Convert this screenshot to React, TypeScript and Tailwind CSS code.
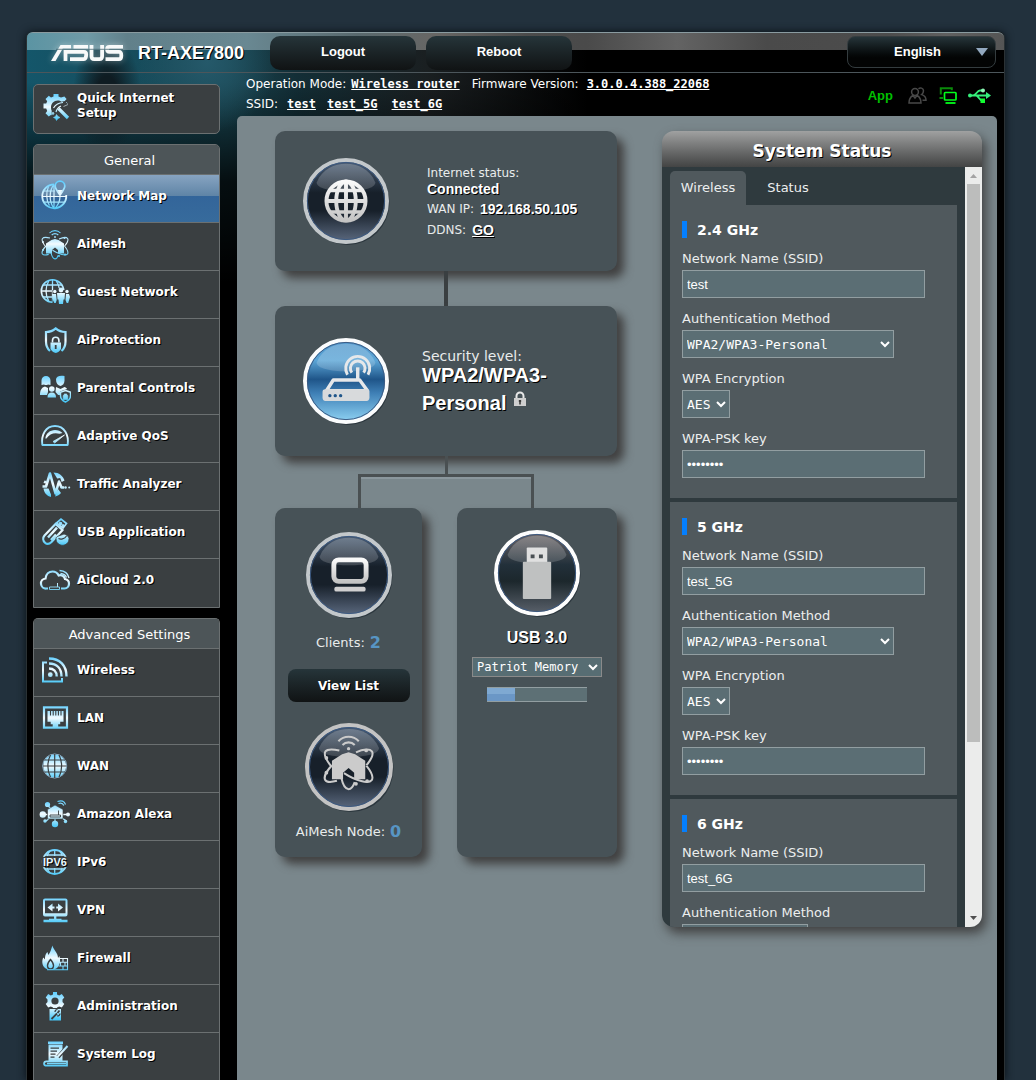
import type { ReactNode } from 'react'

const ice = 'url(#ice)'

interface IconProps {
  children: ReactNode
}

function MenuIcon({ children }: IconProps) {
  return (
    <svg viewBox="0 0 32 32" className="h-8 w-8 shrink-0" fill="none" stroke={ice} strokeWidth="1.6" aria-hidden="true">
      {children}
    </svg>
  )
}

function MeshShape({ paint }: { paint: string }) {
  return (
    <g fill="none" stroke={paint} strokeWidth="1.1">
      <path d="M10.5 5a7.500 7.500 0 0 1 11 0M12.700 7a4.600 4.600 0 0 1 6.600 0" />
      <circle cx="16" cy="9" r="0.9" fill={paint} stroke="none" />
      <path d="M16 11 12.500 12 7 15.500v10h6V22l3-2.500 3 2.500v3.500h6v-10L19.500 12z" fill={paint} stroke="none" />
      <path d="M20 11c4-1.800 7.500-2 8.600-.5 1 1.500-.5 4.500-3 7.500M11 10c-3.500-.8-6.500-.8-7.500.5-1 1.500.6 5 3.500 8.500M7 18c-3 3.200-4.600 6.500-3.600 8 .8 1.200 3.300 1.200 6.300.4M25.500 18c2.800 3.500 4 6.500 3 8-1.700 2.200-8.500.4-15-3.800" />
      <path d="M12 24.500c.8 3.800 2.300 6.400 4 6.400 1.300 0 2.500-1.500 3.300-3.800" />
      <circle cx="25.500" cy="10" r="1" fill={paint} stroke="none" />
      <circle cx="4" cy="14" r="1" fill={paint} stroke="none" />
      <circle cx="4" cy="22" r="1" fill={paint} stroke="none" />
      <circle cx="26" cy="26.500" r="1" fill={paint} stroke="none" />
      <circle cx="20" cy="28" r="1" fill={paint} stroke="none" />
    </g>
  )
}

const icons: Record<string, ReactNode> = {
  setup: (
    <MenuIcon>
      <path
        d="M22 6.500l-2.500-1V3h-5v2.500L12 6.600 9.800 4.800 6.500 8.100 8.200 10.300l-1 2.300H4.500v5h2.700l1 2.500-1.700 2.200 3.200 3.200 2.200-1.600.8.400v-4.500a7 7 0 0 1-.7-3.200c0-4 2.800-7 6.800-7 1.500 0 2.700.5 3.700 1.200l3.300-.8 1.800-2-2.200-2.500z"
        fill={ice}
        stroke="none"
      />
      <path d="M19.500 17.500 29 27" strokeWidth="3.200" />
      <path d="M14.500 17a12 12 0 0 1 9.500-5.500M17 21a9 9 0 0 1 5-6" strokeWidth="1.200" />
      <path d="M27 11l1.600 1.600M24.500 15.500l4.500-2M17.500 23.500l1.500 2 2 1-2 1-1.500 2-1-2-2-1 2-1zM14 21l1 1.400-1 1.400-1-1.400z" fill={ice} strokeWidth="0.6" />
    </MenuIcon>
  ),
  map: (
    <MenuIcon>
      <path d="M15 4.300A12 12 0 1 0 27.200 15" strokeWidth="1.800" />
      <path d="M15 4.500c-4.500 5-5.500 16-.5 23.300M16.500 27.800c3-3.500 4.500-7.500 4.500-11.300M15 4.500V28M4.800 11H16M3.500 16.500h24M5 22.200h20.500M9.500 6.500C8 10 7.500 13 7.800 16.500c.1 4 1.200 7 2.700 9" strokeWidth="1.200" />
      <path d="M21 15c-2.800-4-4.800-6.500-4.800-9a4.800 4.800 0 0 1 9.600 0c0 2.500-2 5-4.800 9z" fill="#6a8cad" strokeWidth="1.700" />
      <path d="M18.500 10 21 15l2.500-5z" fill="#e6f7ff" stroke="none" />
    </MenuIcon>
  ),
  mesh: (
    <MenuIcon>
      <MeshShape paint={ice} />
    </MenuIcon>
  ),
  guest: (
    <MenuIcon>
      <circle cx="13.500" cy="15" r="11.200" />
      <path d="M13.500 3.800v22.400M2.300 15H18M4 9h19M4 21h10M10 4.300c-4 6.500-4 15 0 21.400M17 4.300c2 3 3 5.500 3.200 8" strokeWidth="1.300" />
      <path d="M13.500 14h16v13h-16z" fill="#3a3f41" stroke="none" />
      <g fill={ice} stroke="none">
        <circle cx="22" cy="14" r="2.400" />
        <circle cx="15.800" cy="15.500" r="1.700" />
        <circle cx="28" cy="15.500" r="1.700" />
        <path d="M18 17h8l-.5 6.500h-1L24 28h-4l-.5-4.500h-1zM13 18h4l.7 6-1 3h-1.400l-2.100-4.500zM27 18h3l1 3-1.800 6h-1.500l-1.200-3z" />
      </g>
    </MenuIcon>
  ),
  protection: (
    <MenuIcon>
      <path d="M11 27C8 24.500 7 21 7 17.500V8c3.500 0 7-1.200 9.700-3.600C19.500 6.800 23 8 26.500 8v9.500c0 3.500-1 7-4 9.500" strokeWidth="2.200" />
      <path d="M13.500 18.500v-2a3.200 3.200 0 0 1 6.400 0v2" strokeWidth="1.600" />
      <path d="M11.500 18.500H22V25c-1.400 2.500-3.200 3.500-5.200 4-2.200-.5-4-1.500-5.300-4z" fill={ice} stroke="none" />
      <path d="M16.700 21v4" stroke="#3a3f41" strokeWidth="1.800" />
    </MenuIcon>
  ),
  parental: (
    <MenuIcon>
      <g fill={ice} stroke="none">
        <path d="M2.500 13V8.500a4.500 4.500 0 0 1 9 0V13l-2.500-.5a4 4 0 0 1-4 0z" />
        <path d="M17 7.500c0-3 3.500-4.500 8.500-3.500v4.500c0 3-1.700 5-4 5.500-2.700-.5-4.500-3-4.500-6.500z" />
        <path d="M1 23c0-4.500 1.500-7.500 5-8.500l3 1.500v4l-1 3zM17 15l4.500 2 4-2c1 .3 2 1 2.600 2l-7 2.500V23h-2l-2.600-3z" />
        <circle cx="12.800" cy="17" r="2.800" />
        <path d="M8.500 25.500c0-3.500 1.500-5 4.300-5s4.200 1.500 4.200 5z" />
      </g>
      <path d="M26.500 18.500l5 1.700v3.500c0 3-2 5-5 6.300-3-1.300-5-3.300-5-6.300v-3.500z" fill="#3a3f41" strokeWidth="1.500" />
      <path d="M24.200 23.500h4.600v4h-4.600zM25.200 23.500v-1.500h2.600v1.500" fill={ice} strokeWidth="0.7" />
    </MenuIcon>
  ),
  qos: (
    <MenuIcon>
      <path d="M3.300 25C2 15 6.500 6 16 6s14 9 12.700 19z" strokeWidth="1.900" strokeLinejoin="round" />
      <path d="M6.300 18.500c.7-5 4.500-8.500 9.700-8.500 3 0 5.600 1 7.500 3l-3 .8c-4.700-1.500-10-.3-13 4.700z" fill={ice} stroke="none" />
      <path d="M14 21.500 25.500 15l-9.800 8z" fill={ice} strokeWidth="0.8" />
    </MenuIcon>
  ),
  traffic: (
    <MenuIcon>
      <path d="M3.500 18.500H7l4-13 5.500 20 3.500-12 2.500 6h2.500" strokeWidth="2.600" strokeLinejoin="round" />
      <g fill={ice} stroke="none">
        <path d="M4.500 20.500h5l2.500 6v2.500c-4-1-7-4-7.500-8.500zM14.500 4.500c5.500 0 9.500 3.500 11 8l-2.800 1.500-1.500-4-3 .5zM4.500 15l1-2.500 2 .5-.8 2.500zM19 21l-3 7.500c2.500-.4 4.500-1.800 6-3.500z" />
        <circle cx="26.500" cy="19.500" r="1.300" />
        <circle cx="30.200" cy="19.500" r="1" />
      </g>
    </MenuIcon>
  ),
  usb: (
    <MenuIcon>
      <path d="M5.500 19.500 16.500 8l7 6-11 12c-2 2-4.500 2.500-6.500.7-2.200-2-2.300-5-.5-7.200z" strokeWidth="2.200" />
      <path d="M9 21.500l9-9.800M12 24l5-5.500" strokeWidth="2.500" />
      <path d="M17.500 7 22 3l5.500 4.500L24 12z" strokeWidth="1.700" />
      <circle cx="21.500" cy="7.500" r="1" fill={ice} />
      <circle cx="24" cy="9.500" r="0.700" fill={ice} />
      <path d="M17 22.500c0-2.500 5-3 8-4.500 2 .5 5 2.500 5 4.500 0 9-13 9-13 0z" fill={ice} stroke="#3a3f41" strokeWidth="0.800" />
      <path d="M19.500 22.500c2 1 6 .7 8-2.500" stroke="#3a3f41" strokeWidth="1.200" />
    </MenuIcon>
  ),
  cloud: (
    <MenuIcon>
      <path
        d="M9 24.500H7.500a5 5 0 0 1-1-10C7 10 10 7.500 13.500 7.500c2.800 0 5 1.500 6.200 4 3-1 5.500.5 6.300 3.500 2.500.5 4 2.500 4 4.700 0 2.700-2 4.800-4.500 4.800H22"
        strokeWidth="2.200"
      />
      <path d="M10.500 23h10v2.500h-10z" strokeWidth="0.900" />
      <path d="M18.500 19v4" strokeWidth="1" />
      <path d="M20.500 6.500c5 .2 8.500 2.800 9.500 7.500M21.500 9.500c3 .2 5 1.500 6 4" strokeWidth="1.300" />
    </MenuIcon>
  ),
  wireless: (
    <MenuIcon>
      <path d="M8 8.500H4v19h19V24" strokeWidth="2" />
      <circle cx="11.300" cy="20.700" r="2.400" fill={ice} stroke="none" />
      <path d="M10 14.500c4.500 0 7.700 3 7.700 8M10 9.500c8 0 12.500 5 12.500 13M10 4.500c11 0 17.500 7 17.500 18" strokeWidth="2.400" />
    </MenuIcon>
  ),
  lan: (
    <MenuIcon>
      <path d="M5 5.300h23v20.400H5z" strokeWidth="2.200" />
      <path d="M8.500 9h16v10.700h-3.300v2.500h-2V26h-5.500v-3.800h-2v-2.500H8.500z" fill={ice} stroke="none" />
      <path d="M11.500 8.500v5M14.200 8.500v5M16.800 8.500v5M19.400 8.500v5M22 8.500v5" stroke="#3a3f41" strokeWidth="1.100" />
    </MenuIcon>
  ),
  wan: (
    <MenuIcon>
      <circle cx="15.700" cy="16" r="11.500" fill={ice} stroke="none" />
      <circle cx="15.700" cy="16" r="12" stroke="#8fb4cc" strokeWidth="1" />
      <path d="M15.700 4v24M4 16h23.500M5.500 10h20.500M5.500 22h20.500M11.500 5c-3.500 6.500-3.500 15.500 0 22M20 5c3.500 6.500 3.500 15.500 0 22" stroke="#3a3f41" strokeWidth="1.200" />
    </MenuIcon>
  ),
  alexa: (
    <MenuIcon>
      <path d="M4 16.500h24M8 7l5 4.500M7 23l5-4M27.500 23 20 18M16 20v6" strokeWidth="1.300" />
      <path d="M16 7 24 11.500V21H8.500v-9.500z" fill={ice} stroke="#3a3f41" strokeWidth="0.600" />
      <path d="M11 17h10.500v2H11zM19.500 12.500V17" stroke="#3a3f41" strokeWidth="0.900" />
      <g fill={ice} stroke="none">
        <circle cx="8.500" cy="6.500" r="2.600" />
        <circle cx="3.800" cy="16.500" r="3.200" />
        <circle cx="16" cy="26" r="3.200" />
        <circle cx="6" cy="23" r="1.700" />
        <circle cx="26.500" cy="23.500" r="1.700" />
        <circle cx="29" cy="16.500" r="2" />
      </g>
      <path d="M18.500 3.500c4-1.500 7-.5 8 3M19.500 5.500c2.800-.8 4.500 0 5.300 2" strokeWidth="1.200" />
    </MenuIcon>
  ),
  ipv6: (
    <MenuIcon>
      <circle cx="15.700" cy="16" r="12" strokeWidth="1.800" />
      <path d="M15.700 4v6M15.700 22v6M6 9h20M6 23h20M11 5C9.500 6.500 8.700 8 8.200 10M20.500 5c1.500 1.500 2.300 3 2.700 5M8.200 22c.5 2 1.300 3.600 2.800 5M23.200 22c-.5 2-1.300 3.600-2.700 5" strokeWidth="1.300" />
      <path d="M2.500 10.800h27v10.400h-27z" fill="#3a3f41" stroke="none" />
      <text x="16" y="20" textAnchor="middle" fontSize="11" fill="#e8f8ff" stroke="none" className="font-['Liberation_Sans'] font-bold">
        IPV6
      </text>
    </MenuIcon>
  ),
  vpn: (
    <MenuIcon>
      <rect x="5" y="5.500" width="22.500" height="16" rx="1" strokeWidth="2" />
      <path d="M5 20.500h22.500" strokeWidth="2.500" />
      <path d="M16.200 22v4M4.500 27h24M10 26h12.500" strokeWidth="2.300" />
      <path d="M13.500 9.500v8l-5-4zM19 9.500v8l5-4z" fill={ice} stroke="none" />
      <path d="M12.500 13.500h3M17.200 13.500h3" strokeWidth="1.800" />
    </MenuIcon>
  ),
  firewall: (
    <MenuIcon>
      <path
        d="M13.500 3.500c.5 4 5.500 7 5.500 12.500l1.500-2c1 4.500 1 9-2.500 12-3.500 2.500-9 2.500-12 0-3.500-3-3-8-1.700-10.500l1.700 2C6 13 7 11.500 8.500 10l.8 3c2.500-3 2.700-6 4.200-9.500z"
        fill={ice}
        stroke="none"
      />
      <path d="M11.500 17.500c1.800 2.200 3 4 3 6 0 2.200-1.300 3.500-3 3.500s-3-1.300-3-3.500c0-2 1.200-3.800 3-6z" fill={ice} stroke="#3a3f41" strokeWidth="1.400" />
      <path d="M19.500 16.500h9v11.300H8M19.500 20.200h9M19.500 24h9M24 16.500v3.700M21.500 20.200V24M26 20.200V24M24 24v3.700" strokeWidth="1.100" />
    </MenuIcon>
  ),
  admin: (
    <MenuIcon>
      <path
        d="M14 2h4v2.500l2.200 1 2.600-1.400 2.500 3.500-1.800 2v2.500l1.800 2-2.500 3.500-2.600-1.200-2.200 1.200V19h-4v-1.400l-2.200-1.200-2.600 1.200-2.500-3.500 1.800-2V9.600l-1.800-2 2.500-3.500 2.600 1.400 2.200-1z"
        fill={ice}
        stroke="none"
      />
      <circle cx="16" cy="11" r="3.600" fill="#3a3f41" stroke="none" />
      <path d="M10 18.500h12.500V31H10z" fill={ice} stroke="#3a3f41" strokeWidth="1" />
      <path d="M12.500 29l5.500-5.500M20.500 20.500l-2 2.500" stroke="#3a3f41" strokeWidth="1.800" />
      <path d="M16 22c0-1.500 1-2.500 2.500-2.500M18 26c1.500 0 3-1 3-2.500" stroke="#3a3f41" strokeWidth="1.200" />
    </MenuIcon>
  ),
  log: (
    <MenuIcon>
      <path d="M9 3.500h15V6H9z" fill={ice} stroke="none" />
      <path d="M9.500 6.500h14V23h-14z" fill={ice} stroke="none" />
      <path d="M11.500 10.200h8.500M11.500 13.200h6.500M11.500 16.200h5M11.500 19.200h4" stroke="#3a3f41" strokeWidth="1.300" />
      <path d="M28.500 8.500 19 19" strokeWidth="4" stroke="#3a3f41" />
      <path d="M28.500 8 18 19.500" strokeWidth="2" />
      <path d="M5 25.800c0-1.500 1-2.500 2.500-2.500h20.500v4.400H7.500c-1.500 0-2.500-.7-2.500-1.900z" strokeWidth="1.700" />
      <path d="M8 25.500h19" strokeWidth="1.600" />
    </MenuIcon>
  ),
}

const general = [
  { label: 'Network Map', icon: 'map', active: true },
  { label: 'AiMesh', icon: 'mesh' },
  { label: 'Guest Network', icon: 'guest' },
  { label: 'AiProtection', icon: 'protection' },
  { label: 'Parental Controls', icon: 'parental' },
  { label: 'Adaptive QoS', icon: 'qos' },
  { label: 'Traffic Analyzer', icon: 'traffic' },
  { label: 'USB Application', icon: 'usb' },
  { label: 'AiCloud 2.0', icon: 'cloud' },
]

const advanced = [
  { label: 'Wireless', icon: 'wireless' },
  { label: 'LAN', icon: 'lan' },
  { label: 'WAN', icon: 'wan' },
  { label: 'Amazon Alexa', icon: 'alexa' },
  { label: 'IPv6', icon: 'ipv6' },
  { label: 'VPN', icon: 'vpn' },
  { label: 'Firewall', icon: 'firewall' },
  { label: 'Administration', icon: 'admin' },
  { label: 'System Log', icon: 'log' },
]

const bands = [
  { name: '2.4 GHz', ssid: 'test', auth: 'WPA2/WPA3-Personal', wide: true },
  { name: '5 GHz', ssid: 'test_5G', auth: 'WPA2/WPA3-Personal', wide: true },
  { name: '6 GHz', ssid: 'test_6G', auth: 'WPA3-Personal', wide: false },
]

interface MenuProps {
  title: string
  items: { label: string; icon: string; active?: boolean }[]
}

function Menu({ title, items }: MenuProps) {
  return (
    <nav aria-label={title} className="group rounded-t-[5px] border border-[#6b7071] bg-[#3a3f41] last:border-b-0">
      <h2 className="h-[30px] rounded-t border-b border-[#6b7071] bg-[#4d5558] pl-[6px] text-center text-[13px] leading-[31px]">{title}</h2>
      {items.map((item) => (
        <a
          key={item.label}
          href="#"
          className={
            'flex h-12 items-start gap-[6px] border-b border-[#6b7071] pt-[5px] pl-[5px] leading-[33px] font-bold last:border-b-0 group-last:last:h-[47px] [text-shadow:1px_1px_0_#000] ' +
            (item.active ? 'bg-[linear-gradient(#87a4c1_0px,#5f84a6_21px,#33659a_21px,#376b9c_100%)]' : '')
          }
        >
          {icons[item.icon]}
          {item.label}
        </a>
      ))}
    </nav>
  )
}

function Logo() {
  return (
    <svg viewBox="0 0 72 16" className="h-4 w-[72px] overflow-visible drop-shadow-[0_0_3px_#ffffff66]" fill="none" stroke="#f8fafa" strokeWidth="3.800" aria-label="ASUS">
      <path d="M0 16 9.500 0H20v3.600H11.800L4.500 16z" fill="#f8fafa" stroke="none" />
      <path d="M14.500 5v11" />
      <path d="M37 1.900H22.500M14 6.800H33c1.500 0 2.200.8 2.200 2.700s-.7 4.600-2.200 4.600H19" />
      <path d="M40.500 0v11.200c0 2 .8 2.900 2.600 2.900h5.400c1.800 0 2.600-.9 2.600-2.900V0" />
      <path d="M72 1.900H58.500c-1.700 0-2.400.7-2.400 2.400s.7 2.500 2.400 2.500H68c1.600 0 2.300 1 2.300 3.600s-.7 3.700-2.300 3.700H54.500" />
      <path d="M5 4.300H72" stroke="#2f5560" strokeWidth="0.700" />
    </svg>
  )
}

type OrbTone = 'dark' | 'blue' | 'usb'

function Orb({ tone, ring, size, children }: { tone: OrbTone; ring: string; size: number; children: ReactNode }) {
  return (
    <svg viewBox="0 0 88 88" width={size} height={size} className="shrink-0 overflow-visible" aria-hidden="true">
      <circle cx="45.500" cy="46" r="43" fill="#15202a" opacity="0.550" />
      <circle cx="44" cy="44" r="42" fill={`url(#orb-${tone})`} stroke={ring} strokeWidth="4" />
      <circle cx="44" cy="44" r="39.500" fill="none" stroke="#3c5a82" strokeWidth="1" />
      <path d="M14 25C20 11 32 6 44 6s24 5 30 19c0 6-14 9-30 9s-30-3-30-9z" fill="url(#orb-gloss)" />
      {children}
    </svg>
  )
}

function SharedPaint() {
  return (
    <svg width="0" height="0" className="absolute" aria-hidden="true">
      <defs>
        <linearGradient id="ice" gradientUnits="userSpaceOnUse" x1="0" y1="3" x2="0" y2="29">
          <stop offset="0" stopColor="#62cfff" />
          <stop offset="0.500" stopColor="#f2fbff" />
          <stop offset="1" stopColor="#48c8f8" />
        </linearGradient>
        <linearGradient id="orb-dark" x1="0" y1="0" x2="0" y2="1">
          <stop offset="0" stopColor="#4c5f77" />
          <stop offset="0.400" stopColor="#17202a" />
          <stop offset="0.620" stopColor="#17202a" />
          <stop offset="1" stopColor="#5c6a80" />
        </linearGradient>
        <linearGradient id="orb-blue" x1="0" y1="0" x2="0" y2="1">
          <stop offset="0" stopColor="#4f95cb" />
          <stop offset="0.250" stopColor="#5ba5d6" />
          <stop offset="0.480" stopColor="#1f5589" />
          <stop offset="0.650" stopColor="#3f80b6" />
          <stop offset="1" stopColor="#8fd3f4" />
        </linearGradient>
        <linearGradient id="orb-usb" x1="0" y1="0" x2="0" y2="1">
          <stop offset="0" stopColor="#6e6769" />
          <stop offset="0.400" stopColor="#22303a" />
          <stop offset="0.600" stopColor="#1c272c" />
          <stop offset="1" stopColor="#5b626c" />
        </linearGradient>
        <linearGradient id="orb-gloss" x1="0" y1="0" x2="0" y2="1">
          <stop offset="0" stopColor="#fff" stopOpacity="0.220" />
          <stop offset="1" stopColor="#fff" stopOpacity="0.160" />
        </linearGradient>
        <linearGradient id="steel" x1="0" y1="0" x2="0" y2="1">
          <stop offset="0" stopColor="#fafafa" />
          <stop offset="1" stopColor="#c4c4c4" />
        </linearGradient>
      </defs>
    </svg>
  )
}

function Header() {
  return (
    <header className="flex h-[41px] items-start rounded-t-md border-t border-b border-t-[#8a9ba0] border-b-[#4c565b] bg-[linear-gradient(90deg,#5b94a3_0px,#6f9aa6_60px,#61808a_100px,#698892_220px,#59696e_330px,#686664_410px,#4b4b4b_500px,#4a4a4a_560px,#636363_650px,#4a4a4a_740px,#4c4c4c_860px,#606060_920px,#555_100%)] bg-[length:100%_17px] bg-no-repeat pl-6 font-['Liberation_Sans',sans-serif] font-bold">
      <div className="flex h-10 items-center gap-[15px]">
        <Logo />
        <h1 className="text-lg leading-5 [text-shadow:1px_1px_0_#000]">RT-AXE7800</h1>
      </div>
      <button className="mt-[3px] ml-[26px] h-[34px] w-[146px] rounded-[10px] bg-linear-to-b from-[#26353a] to-[#101314] pb-[2px] text-[13px]">Logout</button>
      <button className="mt-[3px] ml-[10px] h-[34px] w-[146px] rounded-[10px] bg-linear-to-b from-[#26353a] to-[#101314] pb-[2px] text-[13px]">Reboot</button>
      <div className="relative mt-[3px] mr-2 ml-auto">
        <select
          aria-label="Language"
          className="h-8 w-[149px] appearance-none rounded-lg border border-[#343c3f] bg-linear-to-b from-[#26353a] to-[#030404] to-70% pr-2 text-center text-[13px]"
        >
          <option>English</option>
        </select>
        <svg viewBox="0 0 12 8" className="pointer-events-none absolute top-3 right-2 h-2 w-3" aria-hidden="true">
          <path d="M0 0h12L6 8z" fill="#93a9c0" />
        </svg>
      </div>
    </header>
  )
}

function InfoLink({ children }: { children: ReactNode }) {
  return (
    <a href="#" className="font-['DejaVu_Sans_Mono',monospace] font-bold underline">
      {children}
    </a>
  )
}

function InfoBar() {
  return (
    <div className="flex h-[43px] items-start justify-between pt-[2px] pr-[6px] pl-[9px]">
      <div>
        <p className="flex gap-[5px] leading-[19px]">
          Operation Mode: <InfoLink>Wireless router</InfoLink>
          <span className="mr-[3px] ml-[7px]">Firmware Version:</span> <InfoLink>3.0.0.4.388_22068</InfoLink>
        </p>
        <p className="flex leading-5">
          <span className="mr-[9px]">SSID:</span>
          <InfoLink>test</InfoLink>
          <span className="mr-[14px] ml-[11px]">
            <InfoLink>test_5G</InfoLink>
          </span>
          <InfoLink>test_6G</InfoLink>
        </p>
      </div>
      <div className="mt-3 flex items-center leading-4">
        <a href="#" className="mr-[15px] font-['Liberation_Sans',sans-serif] text-[13px] font-bold text-[#00bf00]">
          App
        </a>
        <svg viewBox="0 0 19 17" className="mr-3 h-[17px] w-[19px]" fill="none" stroke="#484848" strokeWidth="1.500" aria-hidden="true">
          <circle cx="7" cy="5" r="3.400" />
          <path d="M1 16c0-3 .7-5.800 4-7.500l2 2.500 2-2.500c3.300 1.700 4 4.500 4 7.500z" />
          <path d="M10.500 1.800c1.500-1.500 5-1 5 2 0 1.700-.8 3-1.800 3.800 3 .8 4.300 2.700 4.300 5.700h-3.500" />
        </svg>
        <svg viewBox="0 0 18 17" className="mr-[11px] h-[17px] w-[18px]" fill="none" aria-hidden="true">
          <path d="M1.800 7.500V1.200h11v2M.500 11h3.500" stroke="#0a8a0a" strokeWidth="2" />
          <rect x="5.500" y="5.500" width="11.500" height="7.500" rx="0.800" stroke="#00ff1a" strokeWidth="1.700" />
          <path d="M6.500 16h10" stroke="#00ff1a" strokeWidth="1.800" />
        </svg>
        <svg viewBox="0 0 23 16" className="h-4 w-[23px]" fill="none" stroke="#35f07a" strokeWidth="1.800" aria-hidden="true">
          <path d="M2 7.500h18M5 7.500c3 0 4-5 7-5h2.500M8 7.500c2.500 0 3 5 6.500 5" />
          <circle cx="2" cy="7.500" r="2" fill="#35f07a" stroke="none" />
          <circle cx="15" cy="2.500" r="2" fill="#8ff5b5" stroke="none" />
          <path d="M12.500 10.500H17v4.500h-4.500z" fill="#12ff30" stroke="none" />
          <path d="M18 4 23 7.500 18 11z" fill="#35f07a" stroke="none" />
        </svg>
      </div>
    </div>
  )
}

const cardClass = 'rounded-[10px] bg-[#475257] shadow-[7px_7px_10px_#404040]'
const valueClass = "font-['Liberation_Sans',sans-serif] text-sm font-bold text-white [text-shadow:1px_1px_0_#000]"

function NetworkMap() {
  return (
    <section className="flex flex-1 flex-col text-[#e9ecec]" aria-label="Network Map">
      <div className={'flex h-[140px] items-center gap-[38px] pl-7 ' + cardClass}>
        <Orb tone="dark" ring="#c3c8cb" size={86}>
          <g fill="none" stroke="url(#steel)" strokeWidth="4">
            <circle cx="44" cy="44" r="20" />
            <ellipse cx="44" cy="44" rx="10" ry="20" />
          </g>
          <path d="M42 24h4v40h-4zM24 42h40v4H24zM28 31.500h32v3.500H28zM28 53.500h32V57H28z" fill="url(#steel)" />
        </Orb>
        <div className="pt-1">
          <p className="leading-4">Internet status:</p>
          <p className={'leading-4 ' + valueClass}>Connected</p>
          <p className="mt-[2px] flex gap-[6px] leading-[21px]">
            WAN IP: <span className={'leading-[21px] ' + valueClass}>192.168.50.105</span>
          </p>
          <p className="flex gap-[6px] leading-[21px]">
            DDNS:
            <a href="#" className={'leading-[21px] underline ' + valueClass}>
              GO
            </a>
          </p>
        </div>
      </div>
      <div className="h-[35px] w-1 self-center bg-[#3a3f41]" />

      <div className={'flex h-[150px] items-center gap-[33px] pl-7 ' + cardClass}>
        <Orb tone="blue" ring="#fbfcfd" size={86}>
          <g fill="none" stroke="#e6e8ea" strokeWidth="3">
            <path d="M56 43V30" strokeWidth="3.500" />
            <path d="M50 35.500a7.500 7.500 0 1 1 12 0" />
            <path d="M45.500 37.500a12.300 12.300 0 1 1 21 0" />
            <path d="M31 43h27l8 11H24z" strokeWidth="3.500" strokeLinejoin="round" />
          </g>
          <path d="M20 55c0-1.500 1-2.500 2.500-2.500h43c1.500 0 2.500 1 2.500 2.500v6c0 2-1 3.500-3 3.500H23c-2 0-3-1.500-3-3.500z" fill="#d8dadc" />
          <g fill="#20568a">
            <circle cx="27.500" cy="59" r="1.700" />
            <circle cx="33" cy="59" r="1.700" />
            <circle cx="38.500" cy="59" r="1.700" />
          </g>
        </Orb>
        <div className="pt-[6px]">
          <p className="text-sm leading-[10px]">Security level:</p>
          <p className="w-[150px] font-['Liberation_Sans',sans-serif] text-xl leading-7 font-bold text-white [text-shadow:1px_1px_0_#000]">
            WPA2/WPA3-Personal
            <svg viewBox="0 0 14 16" className="mb-[10px] ml-[7px] inline h-4 w-[14px]" aria-hidden="true">
              <path d="M3.500 8V5a3.500 3.500 0 0 1 7 0v3" fill="none" stroke="#e8e8e8" strokeWidth="2" />
              <path d="M1 7h12v8H1z" fill="#cfcfcf" />
              <path d="M7 9v4.500M5.800 10h2.400" stroke="#333" strokeWidth="1.500" />
            </svg>
          </p>
        </div>
      </div>
      <div className="h-[18px] w-[3px] self-center bg-[#4a5052]" />
      <div className="mx-[83px] h-[34px] border-3 border-b-0 border-[#4a5052] shadow-[inset_0_2px_0_#8b979d]" />

      <div className="flex justify-between gap-[35px]">
        <div className={'flex w-[147px] grow flex-col items-center pt-6 pb-[15px] ' + cardClass}>
          <Orb tone="dark" ring="#c3c8cb" size={86}>
            <rect x="28.500" y="28.500" width="33" height="22" rx="5" fill="none" stroke="url(#steel)" strokeWidth="5" />
            <rect x="29" y="56" width="32" height="5" rx="2" fill="#d0cfd0" />
          </Orb>
          <p className="mt-[15px] flex h-5 items-center gap-[5px] text-[13px]">
            Clients:
            <a href="#" className="text-base leading-5 font-bold text-[#5795c4]">
              2
            </a>
          </p>
          <button className="mt-4 h-[33px] w-[122px] rounded-lg bg-linear-to-b from-[#26353a] to-[#101314] font-bold text-white [text-shadow:1px_1px_0_#000]">
            View List
          </button>
          <div className="mt-[21px] h-[88px]">
            <Orb tone="dark" ring="#c3c3c3" size={88}>
              <g transform="translate(14 9) scale(1.850)">
                <MeshShape paint="#cbcbcb" />
              </g>
            </Orb>
          </div>
          <p className="mt-[11px] flex h-5 items-center gap-[5px] text-[13px]">
            AiMesh Node:
            <a href="#" className="text-base leading-5 font-bold text-[#5795c4]">
              0
            </a>
          </p>
        </div>

        <div className={'flex w-[160px] grow flex-col items-center pt-[22px] ' + cardClass}>
          <Orb tone="usb" ring="#fdfdfd" size={86}>
            <rect x="33.500" y="18" width="21" height="16" rx="1" fill="#e0e0e0" />
            <path d="M37.500 25h4v4h-4zM46 25h4v4h-4z" fill="#4a5054" />
            <rect x="29.500" y="32.500" width="29" height="38" rx="1" fill="#bfc1c1" />
          </Orb>
          <p className="mt-3 font-['Liberation_Sans',sans-serif] text-base leading-5 font-bold text-white [text-shadow:1px_1px_0_#000]">USB 3.0</p>
          <select
            aria-label="USB device"
            className="mt-[9px] h-5 w-[130px] border border-[#8a8a8a] bg-[#576d73] font-['DejaVu_Sans_Mono',monospace] text-xs text-white"
          >
            <option>Patriot Memory</option>
          </select>
          <div className="mt-[10px] h-[15px] w-[100px] border-y border-[#929ea1] bg-[#5d7075]">
            <div className="h-full w-7 bg-[linear-gradient(#7fa9d2_45%,#6b97c6_45%)]" />
          </div>
        </div>
      </div>
    </section>
  )
}

const fieldClass = 'mb-[10px] h-7 border border-[#929ea1] bg-[#5b6e74] text-[13px] text-white'

function Band({ name, ssid, auth, wide }: { name: string; ssid: string; auth: string; wide: boolean }) {
  const id = name.split(' ')[0].replace('.', '')
  return (
    <fieldset className="flex flex-col items-start bg-[#50595d] px-3 pt-4 pb-[10px] text-[13px]">
      <legend className="contents">
        <span className="mb-[10px] flex h-[17px] items-center border-l-5 border-[#047fff] pl-[10px] text-sm font-bold text-white">{name}</span>
      </legend>
      <label htmlFor={`ssid-${id}`} className="leading-[22px]">
        Network Name (SSID)
      </label>
      <input id={`ssid-${id}`} type="text" defaultValue={ssid} className={`w-[243px] px-1 font-['Liberation_Sans',sans-serif] ${fieldClass}`} />
      <label htmlFor={`auth-${id}`} className="leading-[22px]">
        Authentication Method
      </label>
      <select id={`auth-${id}`} className={`font-['DejaVu_Sans_Mono',monospace] ${wide ? 'w-[212px]' : 'w-[126px]'} ${fieldClass}`}>
        <option>{auth}</option>
      </select>
      <label htmlFor={`enc-${id}`} className="leading-[22px]">
        WPA Encryption
      </label>
      <select id={`enc-${id}`} className={`w-12 font-['DejaVu_Sans_Mono',monospace] ${fieldClass}`}>
        <option>AES</option>
      </select>
      <label htmlFor={`key-${id}`} className="leading-[22px]">
        WPA-PSK key
      </label>
      <input id={`key-${id}`} type="password" defaultValue="password" className={`w-[243px] px-1 font-['Liberation_Sans',sans-serif] ${fieldClass}`} />
    </fieldset>
  )
}

function SystemStatus() {
  return (
    <section className="w-80 shrink-0 overflow-hidden rounded-xl text-[#eceeee] shadow-[4px_6px_12px_#404040]" aria-label="System Status">
      <h2 className="h-9 bg-linear-to-b from-[#a0a1a1] to-[#434444] pt-[2px] text-center text-[17px] leading-9 font-bold text-white [text-shadow:1px_1px_0_#000]">
        System Status
      </h2>
      <div className="flex h-[760px] bg-[#2f3a3e]">
        <div className="flex-1 overflow-y-auto px-2 pt-1 [scrollbar-width:none]">
          <div className="flex text-[13px]">
            <button className="h-[34px] w-[76px] rounded-t-[5px] bg-[#50595d]">Wireless</button>
            <button className="h-[34px] w-[84px]">Status</button>
          </div>
          <div className="flex flex-col gap-1">
            {bands.map((band) => (
              <Band key={band.name} {...band} />
            ))}
          </div>
        </div>
        <div className="flex w-[17px] flex-col items-center bg-[#ebeceb]" aria-hidden="true">
          <svg viewBox="0 0 17 17" className="h-[17px] w-[17px]">
            <path d="M5 11h7L8.500 7z" fill="#a3a3a3" />
          </svg>
          <div className="h-[558px] w-[13px] bg-[#bcbdbc]" />
          <svg viewBox="0 0 17 17" className="mt-auto h-[17px] w-[17px]">
            <path d="M5 6h7l-3.500 4z" fill="#4f4f4f" />
          </svg>
        </div>
      </div>
    </section>
  )
}

export default function App() {
  return (
    <div className="min-h-screen bg-[#22313d] pt-8 pr-[31px] pl-[26px] font-['DejaVu_Sans',Verdana,sans-serif] text-xs text-white">
      <SharedPaint />
      <div className="flex min-h-[calc(100vh-32px)] flex-col rounded-t-md border-r border-l border-[#2a3134] bg-black bg-[radial-gradient(ellipse_34px_60px_at_80px_62px,#0f1c22_30%,#0f1c2200_100%),radial-gradient(circle_70px_at_180px_30px,#25596a_0%,#25596a00_100%),linear-gradient(#0000_50px,#000c_150px,#000_250px),linear-gradient(90deg,#14566a_0px,#184450_200px,#132e36_270px,#1a1f21_400px,#000_560px)] shadow-[0_0_8px_#0a1015]">
        <Header />
        <div className="flex flex-1">
          <aside className="flex w-[210px] shrink-0 flex-col gap-[10px] pt-[11px] pr-[17px] pl-[6px]">
            <a
              href="#"
              className="flex h-[50px] items-start gap-[6px] rounded-[5px] border border-[#6b7071] bg-[#3a3f41] pt-[6px] pl-[5px] leading-[15px] font-bold [text-shadow:1px_1px_0_#000]"
            >
              {icons.setup}
              <span className="w-[110px]">Quick Internet Setup</span>
            </a>
            <Menu title="General" items={general} />
            <Menu title="Advanced Settings" items={advanced} />
          </aside>
          <div className="flex min-w-0 flex-1 flex-col pr-[7px]">
            <InfoBar />
            <main className="flex flex-1 items-start gap-[45px] rounded-t-[5px] bg-[#7a878c] pt-[15px] pr-[15px] pl-[38px]">
              <NetworkMap />
              <SystemStatus />
            </main>
          </div>
        </div>
      </div>
    </div>
  )
}
